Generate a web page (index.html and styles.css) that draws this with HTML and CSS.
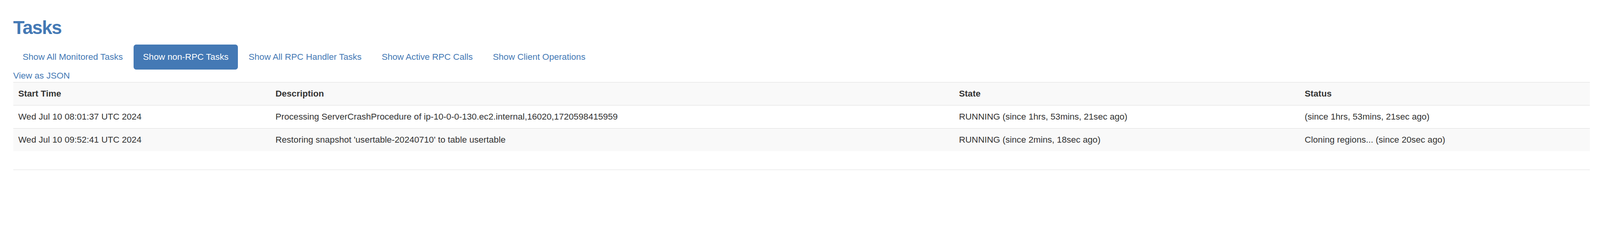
FILE: index.html
```html
<!DOCTYPE html>
<html>
<head>
<meta charset="utf-8">
<title>Tasks</title>
<link rel="stylesheet" href="styles.css">
</head>
<body>
<div class="page">
  <h1 class="title">Tasks</h1>
  <ul class="pills">
    <li><a href="#">Show All Monitored Tasks</a></li>
    <li class="active"><a href="#">Show non-RPC Tasks</a></li>
    <li><a href="#">Show All RPC Handler Tasks</a></li>
    <li><a href="#">Show Active RPC Calls</a></li>
    <li><a href="#">Show Client Operations</a></li>
  </ul>
  <a class="json" href="#">View as JSON</a>
  <table class="tasks">
    <colgroup>
      <col class="c-start">
      <col class="c-desc">
      <col class="c-state">
      <col class="c-status">
    </colgroup>
    <tr>
      <th>Start Time</th>
      <th>Description</th>
      <th>State</th>
      <th>Status</th>
    </tr>
    <tr>
      <td>Wed Jul 10 08:01:37 UTC 2024</td>
      <td>Processing ServerCrashProcedure of ip-10-0-0-130.ec2.internal,16020,1720598415959</td>
      <td>RUNNING (since 1hrs, 53mins, 21sec ago)</td>
      <td>(since 1hrs, 53mins, 21sec ago)</td>
    </tr>
    <tr>
      <td>Wed Jul 10 09:52:41 UTC 2024</td>
      <td>Restoring snapshot 'usertable-20240710' to table usertable</td>
      <td>RUNNING (since 2mins, 18sec ago)</td>
      <td>Cloning regions... (since 20sec ago)</td>
    </tr>
  </table>
  <hr class="rule">
</div>
</body>
</html>
```

FILE: styles.css
```css
:root {
  /* one reference pixel expressed in CSS px */
  --u: 0.806px;
  --blue: #4479b5;
}

html, body {
  margin: 0;
  padding: 0;
  background: #fff;
}

body {
  font-family: "Liberation Sans", Helvetica, Arial, sans-serif;
  font-size: calc(28 * var(--u));
  line-height: calc(40 * var(--u));
  color: #333;
}

.page {
  padding: 0 calc(32 * var(--u)) 0 calc(42 * var(--u));
}

.title {
  margin: calc(56 * var(--u)) 0 calc(20 * var(--u)) 0;
  font-size: calc(59 * var(--u));
  line-height: calc(65 * var(--u));
  font-weight: bold;
  letter-spacing: calc(-2 * var(--u));
  color: var(--blue);
}

.pills {
  list-style: none;
  margin: 0;
  padding: 0;
  display: flex;
  gap: calc(4 * var(--u));
}

.pills li a {
  display: block;
  padding: calc(20 * var(--u)) calc(30 * var(--u));
  line-height: calc(40 * var(--u));
  border-radius: calc(8 * var(--u));
  color: var(--blue);
  text-decoration: none;
}

.pills li.active a {
  background: var(--blue);
  color: #fff;
}

.json {
  display: block;
  width: max-content;
  color: var(--blue);
  text-decoration: none;
  line-height: calc(40 * var(--u));
}

.tasks {
  width: 100%;
  table-layout: fixed;
  border-collapse: collapse;
  border-spacing: 0;
  margin: 0 0 calc(58 * var(--u)) 0;
}

.c-start { width: calc(817 * var(--u)); }
.c-desc { width: calc(2171 * var(--u)); }
.c-state { width: calc(1098 * var(--u)); }
.c-status { width: auto; }

.tasks th,
.tasks td {
  padding: calc(16 * var(--u));
  line-height: calc(40 * var(--u));
  text-align: left;
  vertical-align: top;
  border-top: calc(2 * var(--u)) solid #ddd;
  white-space: nowrap;
  overflow: hidden;
}

.tasks th {
  font-weight: bold;
}

.tasks tr:nth-child(odd) {
  background: #f9f9f9;
}

.rule {
  margin: 0;
  height: 0;
  border: 0;
  border-top: calc(2 * var(--u)) solid #ddd;
}
```
